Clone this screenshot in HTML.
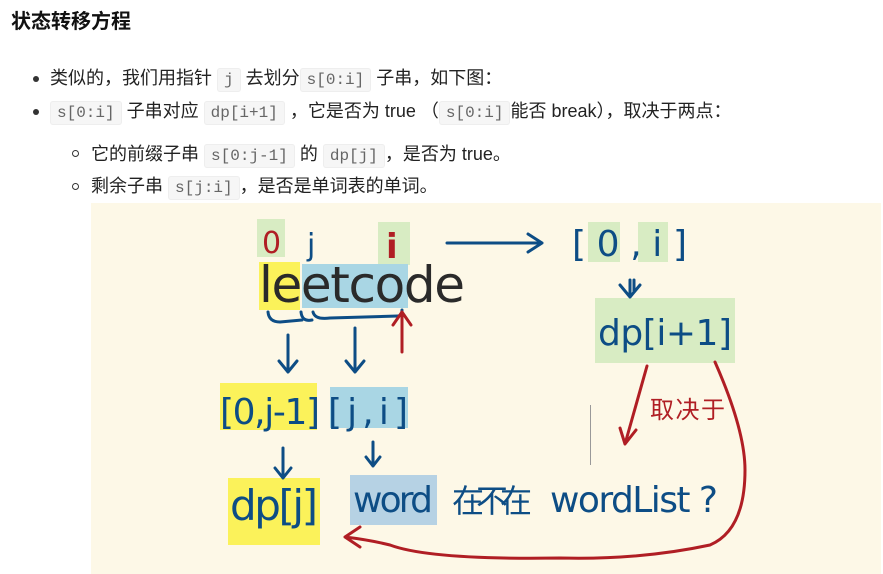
<!DOCTYPE html>
<html><head><meta charset="utf-8"><style>
body{margin:0;width:883px;height:574px;overflow:hidden;background:#fff;font-family:"Liberation Sans","Noto Sans CJK SC",sans-serif;color:#222;font-size:18px;position:relative}
.t{position:absolute;white-space:nowrap;line-height:24px}
code{font-family:"Liberation Mono",monospace;font-size:16px;color:#666;background:#f6f6f6;border:1px solid #eee;border-radius:3px;padding:2px 6px}
.dot{position:absolute;width:6px;height:6px;border-radius:50%;background:#333}
.cir{position:absolute;width:5px;height:5px;border-radius:50%;border:1.3px solid #333}
</style></head><body>
<div class="t" style="left:11px;top:10px;font-size:20px;font-weight:bold;color:#111">状态转移方程</div>
<div class="dot" style="left:33px;top:76px"></div>
<div class="t" style="left:50px;top:66px">类似的，我们用指针 <code>j</code> 去划分<code>s[0:i]</code> 子串，如下图：</div>
<div class="dot" style="left:33px;top:109px"></div>
<div class="t" style="left:50px;top:99px"><code>s[0:i]</code> 子串对应 <code>dp[i+1]</code> ，它是否为 true （<code>s[0:i]</code>能否 break），取决于两点：</div>
<div class="cir" style="left:72px;top:150px"></div>
<div class="t" style="left:91px;top:142px">它的前缀子串 <code>s[0:j-1]</code> 的 <code>dp[j]</code>，是否为 true。</div>
<div class="cir" style="left:72px;top:183px"></div>
<div class="t" style="left:91px;top:174px">剩余子串 <code>s[j:i]</code>，是否是单词表的单词。</div>
<svg style="position:absolute;left:0;top:0" width="883" height="574">
<rect x="91" y="203" width="790" height="371" fill="#fdf8e7"/>
<g fill="#d8ecc3"><rect x="257" y="219" width="28" height="38"/><rect x="378" y="222" width="32" height="43"/><rect x="588" y="222" width="32" height="40"/><rect x="638" y="222" width="30" height="40"/><rect x="595" y="298" width="140" height="65"/></g>
<g fill="#fbf25a"><rect x="259" y="262" width="41" height="48"/><rect x="220" y="383" width="97" height="47"/><rect x="228" y="478" width="92" height="67"/></g>
<g fill="#a9d6e4"><rect x="302" y="264" width="106" height="44"/><rect x="330" y="387" width="78" height="41"/></g>
<rect x="350" y="475" width="87" height="50" fill="#b6d2e4"/>
<g font-family="DejaVu Sans, sans-serif">
<text x="262" y="253" fill="#b01e24" font-size="30">0</text>
<text x="307" y="255" fill="#0d4d85" font-size="30">j</text>
<text x="386" y="258" fill="#b01e24" font-size="34" font-weight="bold">i</text>
<text x="259" y="302" fill="#2a2a2a" font-size="50" textLength="206">leetcode</text>
<text x="572" y="256" fill="#0d4d85" font-size="36" textLength="115">[0,i]</text>
<text x="598" y="345" fill="#0d4d85" font-size="36" textLength="134">dp[i+1]</text>
<text x="220" y="424" fill="#0d4d85" font-size="36" textLength="100">[0,j-1]</text>
<text x="328" y="424" fill="#0d4d85" font-size="36" textLength="80">[j,i]</text>
<text x="230" y="520" fill="#0d4d85" font-size="42" textLength="88">dp[j]</text>
<text x="353" y="512" fill="#0d4d85" font-size="36" textLength="80">word</text>
<text x="452" y="512" fill="#0d4d85" font-size="32" font-family="Noto Sans CJK SC" textLength="80">在不在</text>
<text x="550" y="512" fill="#0d4d85" font-size="36" textLength="168">wordList ?</text>
<text x="650" y="418" fill="#b01e24" font-size="24" font-family="Noto Sans CJK SC" textLength="75">取决于</text>
</g>
<g fill="none" stroke="#0d4d85" stroke-width="3" stroke-linecap="round" stroke-linejoin="round">
<path d="M447 243 L542 243 M528 234 L542 243 L528 252"/>
<path d="M630 280 V296 M620 285 L630 297 L640 285 M634 280 V292"/>
<path d="M268 312 Q269 322 280 322 L302 320 M301 312 Q302 322 312 320"/>
<path d="M313 312 Q315 320 330 318 L398 316 Q402 316 402 310"/>
<path d="M288 335 V372 M279 361 L288 372 L297 361"/>
<path d="M355 328 V372 M346 361 L355 372 L364 361"/>
<path d="M283 448 V478 M275 468 L283 478 L291 468"/>
<path d="M373 442 V466 M366 457 L373 466 L380 457"/>
</g>
<g fill="none" stroke="#b01e24" stroke-width="3" stroke-linecap="round" stroke-linejoin="round">
<path d="M402 352 V312 M393 325 L402 312 L411 325"/>
<path d="M647 366 L625 444 M620 428 L625 444 L636 430"/>
<path d="M715 362 Q745 430 745 470 Q745 530 710 545 Q640 560 560 558 Q430 560 390 545 Q370 540 345 537 M360 527 L345 537 L360 547"/>
</g>
<line x1="590.5" y1="405" x2="590.5" y2="465" stroke="#999" stroke-width="1"/>
</svg>
</body></html>
